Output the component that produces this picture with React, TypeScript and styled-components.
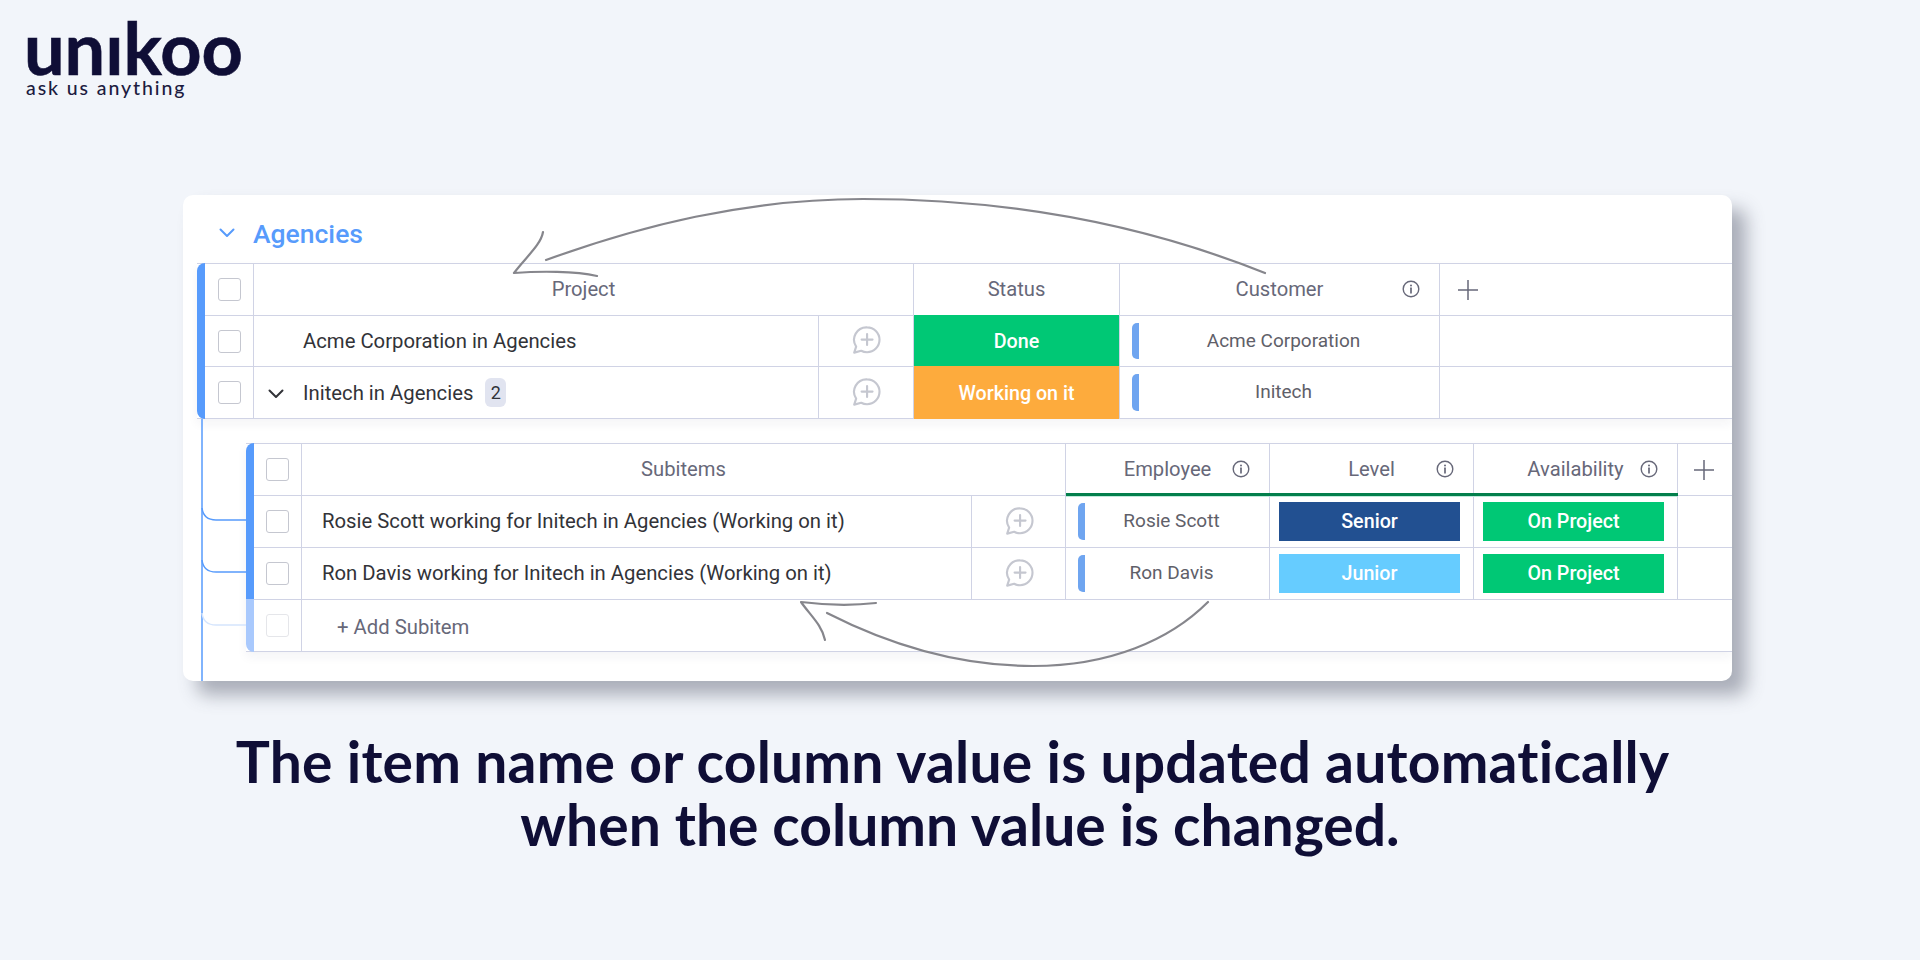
import React from "react";
import styled, { createGlobalStyle } from "styled-components";

const Global = createGlobalStyle`
  html, body { margin: 0; padding: 0; background: #f2f5fa; }
`;

const LINE = "#d0d3e5";

const Page = styled.div`
  position: relative;
  width: 1920px;
  height: 960px;
  overflow: hidden;
  background: #f2f5fa;
  color: #0f0e36;
  font-family: Roboto, "Liberation Sans", sans-serif;
`;

const Brand = styled.header`
  height: 195px;
  box-sizing: border-box;
  padding: 0 0 0 24px;
  display: flex;
  flex-direction: column;
  align-items: flex-start;
`;

const LogoWord = styled.div`
  font-family: Lato, sans-serif;
  font-weight: 700;
  font-size: 72px;
  line-height: 58px;
  margin-top: 18px;
  -webkit-text-stroke: 0.6px #0f0e36;
  color: #0f0e36;
`;

const Tagline = styled.div`
  font-family: Lato, sans-serif;
  font-weight: 500;
  font-size: 19.5px;
  line-height: 22px;
  letter-spacing: 1.9px;
  margin-top: 1px;
  margin-left: 2px;
  color: #1c1b40;
`;

const Card = styled.section`
  position: relative;
  width: 1549px;
  height: 486px;
  margin-left: 183px;
  background: #fff;
  border-radius: 10px;
  box-shadow: 14px 14px 18px rgba(70, 74, 92, 0.42);
  display: flex;
  flex-direction: column;
  overflow: hidden;
`;

const CardBody = styled.div`
  display: flex;
  flex-direction: column;
  padding-left: 14px;
`;

const GroupHead = styled.div`
  height: 68px;
  box-sizing: border-box;
  display: flex;
  align-items: center;
  padding: 8px 0 0 20px;
  gap: 16px;
  color: #579bfc;
  font-size: 26.5px;
  font-weight: 500;
`;

const Table = styled.div<{ $indent?: number; $top?: number }>`
  display: flex;
  flex-direction: column;
  margin-left: ${(p) => p.$indent ?? 0}px;
  margin-top: ${(p) => p.$top ?? 0}px;
  border-top: 1px solid ${LINE};
  box-shadow: 0 5px 10px rgba(40, 44, 80, 0.05);
  position: relative;
`;

const Row = styled.div<{ $cols: string; $h: number }>`
  display: grid;
  grid-template-columns: ${(p) => p.$cols};
  height: ${(p) => p.$h}px;
  box-sizing: border-box;
  border-bottom: 1px solid ${LINE};
`;

const Bar = styled.div<{ $shape?: "top" | "bottom"; $light?: boolean }>`
  background: ${(p) => (p.$light ? "#a9c9fd" : "#579bfc")};
  border-top-left-radius: ${(p) => (p.$shape === "top" ? 8 : 0)}px;
  border-bottom-left-radius: ${(p) => (p.$shape === "bottom" ? 8 : 0)}px;
  margin: -1px 0;
`;

const Cell = styled.div<{ $span?: number; $open?: boolean }>`
  position: relative;
  min-width: 0;
  display: flex;
  align-items: center;
  box-sizing: border-box;
  grid-column: span ${(p) => p.$span ?? 1};
  border-right: ${(p) => (p.$open ? "none" : `1px solid ${LINE}`)};
`;

const CheckCell = styled(Cell)`
  justify-content: center;
`;

const Check = styled.div<{ $faded?: boolean }>`
  width: 23px;
  height: 23px;
  box-sizing: border-box;
  border: 1.5px solid #c5c7d0;
  border-radius: 3px;
  opacity: ${(p) => (p.$faded ? 0.45 : 1)};
`;

const HeaderCell = styled(Cell)<{ $accent?: boolean }>`
  justify-content: center;
  color: #676879;
  font-size: 20.2px;
  padding-bottom: 2px;
  &::after {
    content: "";
    display: ${(p) => (p.$accent ? "block" : "none")};
    position: absolute;
    left: 0;
    right: -1px;
    bottom: -1px;
    height: 3px;
    background: #037f4c;
    box-shadow: 0 1px 0 #bfeadb;
  }
`;

const InfoSlot = styled.span`
  position: absolute;
  right: 19px;
  top: 16px;
  display: flex;
`;

const AddCell = styled(Cell)<{ $pad: number }>`
  padding-left: ${(p) => p.$pad}px;
`;

const NameCell = styled(Cell)<{ $pad: number; $lift?: number }>`
  padding: 0 0 ${(p) => p.$lift ?? 0}px ${(p) => p.$pad}px;
  color: #323338;
  font-size: 20.3px;
`;

const Toggle = styled.span`
  position: absolute;
  left: 12px;
  top: 17px;
  display: flex;
`;

const Count = styled.span`
  margin-left: 12px;
  width: 21px;
  height: 29px;
  border-radius: 6px;
  background: #e1e4f0;
  color: #323338;
  font-size: 18px;
  display: flex;
  align-items: center;
  justify-content: center;
`;

const CommentCell = styled(Cell)`
  justify-content: center;
  padding-bottom: 2px;
`;

const StatusCell = styled(Cell)<{ $bg: string }>`
  justify-content: center;
  background: ${(p) => p.$bg};
  color: #fff;
  font-size: 19.7px;
  font-weight: 500;
  margin: -1px 0;
  padding-top: 1px;
`;

const TagCell = styled(Cell)`
  justify-content: center;
  padding: 0 12px 2px 20px;
  color: #5f6069;
  font-size: 19px;
  &::before {
    content: "";
    position: absolute;
    left: 12px;
    top: 7px;
    bottom: 7px;
    width: 7px;
    background: #6fa5f0;
    border-radius: 5px 0 0 5px;
  }
`;

const LabelCell = styled(Cell)`
  padding: 6px 13px 6px 9px;
`;

const LabelBlock = styled.div<{ $bg: string }>`
  flex: 1;
  height: 100%;
  display: flex;
  align-items: center;
  justify-content: center;
  background: ${(p) => p.$bg};
  color: #fff;
  font-size: 19.7px;
  font-weight: 500;
`;

const AddText = styled(Cell)`
  padding: 2px 0 0 35px;
  color: #676879;
  font-size: 20.3px;
`;

const Caption = styled.h1`
  margin: 49px 0 0;
  text-align: center;
  font-family: Lato, sans-serif;
  font-weight: 700;
  font-size: 57px;
  line-height: 63px;
  font-variant-ligatures: none;
  color: #0f0e36;
`;

const CaptionLine = styled.span<{ $shift?: number; $track?: number }>`
  display: block;
  padding-right: ${(p) => p.$shift ?? 0}px;
  letter-spacing: ${(p) => p.$track ?? 0}px;
`;

const Arrows = styled.svg`
  position: absolute;
  inset: 0;
  pointer-events: none;
  fill: none;
  stroke: #86868c;
  stroke-width: 2.2;
  stroke-linecap: round;
  stroke-linejoin: round;
`;

const Connector = styled.svg`
  position: absolute;
  left: 0;
  top: 0;
  pointer-events: none;
  fill: none;
  stroke-width: 1.5;
`;

const Chevron = ({ color, size, w = 2 }: { color: string; size: number; w?: number }) => (
  <svg width={size} height={size} viewBox="0 0 20 20" fill="none">
    <path d="M3.5 6.5 10 13l6.5-6.5" stroke={color} strokeWidth={w} strokeLinecap="round" strokeLinejoin="round" />
  </svg>
);

const Info = () => (
  <svg width="18" height="18" viewBox="0 0 18 18" fill="none" stroke="#676879">
    <circle cx="9" cy="9" r="7.8" strokeWidth="1.4" />
    <path d="M9 8.2v4.6" strokeWidth="1.7" strokeLinecap="round" />
    <circle cx="9" cy="5.4" r="1" fill="#676879" stroke="none" />
  </svg>
);

const PlusIcon = () => (
  <svg width="22" height="22" viewBox="0 0 22 22" fill="none" stroke="#676879" strokeWidth="1.5">
    <path d="M11 1v20M1 11h20" />
  </svg>
);

const CommentIcon = () => (
  <svg width="30" height="30" viewBox="0 0 28 28" fill="none" stroke="#c5c7d0" strokeWidth="2" strokeLinecap="round" strokeLinejoin="round">
    <path d="M15 2.2a11.6 11.6 0 0 1 0 23.2c-2 0-3.9-.5-5.500-1.400L3 25.800l1.800-5.600A11.600 11.600 0 0 1 15 2.200Z" />
    <path d="M15 8.500v10.200M9.900 13.600h10.200" />
  </svg>
);

const MAIN = "8px 49px 565px 95px 206px 320px 1fr";
const SUB = "8px 48px 670px 94px 204px 204px 204px 1fr";

export default function App() {
  return (
    <Page>
      <Global />
      <Brand>
        <LogoWord>unıkoo</LogoWord>
        <Tagline>ask us anything</Tagline>
      </Brand>

      <Card>
        <CardBody>
          <GroupHead>
            <Chevron color="#579bfc" size={20} />
            <span>Agencies</span>
          </GroupHead>

          <Table>
            <Row $cols={MAIN} $h={52}>
              <Bar $shape="top" />
              <CheckCell><Check /></CheckCell>
              <HeaderCell $span={2}>Project</HeaderCell>
              <HeaderCell>Status</HeaderCell>
              <HeaderCell>
                Customer
                <InfoSlot><Info /></InfoSlot>
              </HeaderCell>
              <AddCell $open $pad={17}><PlusIcon /></AddCell>
            </Row>
            <Row $cols={MAIN} $h={51}>
              <Bar />
              <CheckCell><Check /></CheckCell>
              <NameCell $pad={49}>Acme Corporation in Agencies</NameCell>
              <CommentCell><CommentIcon /></CommentCell>
              <StatusCell $bg="#00c875">Done</StatusCell>
              <TagCell>Acme Corporation</TagCell>
              <Cell $open />
            </Row>
            <Row $cols={MAIN} $h={52}>
              <Bar $shape="bottom" />
              <CheckCell><Check /></CheckCell>
              <NameCell $pad={49}>
                <Toggle><Chevron color="#323338" size={20} /></Toggle>
                Initech in Agencies
                <Count>2</Count>
              </NameCell>
              <CommentCell><CommentIcon /></CommentCell>
              <StatusCell $bg="#fdab3d">Working on it</StatusCell>
              <TagCell>Initech</TagCell>
              <Cell $open />
            </Row>
          </Table>

          <Table $indent={49} $top={24}>
            <Row $cols={SUB} $h={52}>
              <Bar $shape="top" />
              <CheckCell><Check /></CheckCell>
              <HeaderCell $span={2}>Subitems</HeaderCell>
              <HeaderCell $accent>
                Employee
                <InfoSlot><Info /></InfoSlot>
              </HeaderCell>
              <HeaderCell $accent>
                Level
                <InfoSlot><Info /></InfoSlot>
              </HeaderCell>
              <HeaderCell $accent>
                Availability
                <InfoSlot><Info /></InfoSlot>
              </HeaderCell>
              <AddCell $open $pad={15}><PlusIcon /></AddCell>
            </Row>
            <Row $cols={SUB} $h={52}>
              <Bar />
              <CheckCell><Check /></CheckCell>
              <NameCell $pad={20} $lift={2}>Rosie Scott working for Initech in Agencies (Working on it)</NameCell>
              <CommentCell><CommentIcon /></CommentCell>
              <TagCell>Rosie Scott</TagCell>
              <LabelCell><LabelBlock $bg="#225091">Senior</LabelBlock></LabelCell>
              <LabelCell><LabelBlock $bg="#00c875">On Project</LabelBlock></LabelCell>
              <Cell $open />
            </Row>
            <Row $cols={SUB} $h={52}>
              <Bar />
              <CheckCell><Check /></CheckCell>
              <NameCell $pad={20} $lift={2}>Ron Davis working for Initech in Agencies (Working on it)</NameCell>
              <CommentCell><CommentIcon /></CommentCell>
              <TagCell>Ron Davis</TagCell>
              <LabelCell><LabelBlock $bg="#66ccff">Junior</LabelBlock></LabelCell>
              <LabelCell><LabelBlock $bg="#00c875">On Project</LabelBlock></LabelCell>
              <Cell $open />
            </Row>
            <Row $cols={SUB} $h={52}>
              <Bar $shape="bottom" $light />
              <CheckCell><Check $faded /></CheckCell>
              <AddText $span={6} $open>+ Add Subitem</AddText>
            </Row>
          </Table>
        </CardBody>

        <Connector width="70" height="486" viewBox="0 0 70 486">
          <path d="M19 224V486" stroke="#579bfc" />
          <path d="M19 313c1 8 6 12 14 12H63" stroke="#579bfc" />
          <path d="M19 365c1 8 6 12 14 12H63" stroke="#579bfc" />
          <path d="M19 418c1 8 6 12 14 12H63" stroke="#d5e5fd" />
        </Connector>
      </Card>

      <Caption>
        <CaptionLine $shift={15} $track={0.2}>The item name or column value is updated automatically</CaptionLine>
        <CaptionLine>when the column value is changed.</CaptionLine>
      </Caption>

      <Arrows width="1920" height="960" viewBox="0 0 1920 960">
        <path d="M1265 273C1170 235 1040 199 863 199C745 199 640 226 546 260" />
        <path d="M543 232C541 245 525 258 514 273C540 271 575 271 597 276" />
        <path d="M1208 602C1170 640 1110 666 1033 666C950 666 880 640 827 613" />
        <path d="M876 603C850 606 825 605 801 602C810 615 822 625 825 640" />
      </Arrows>
    </Page>
  );
}
